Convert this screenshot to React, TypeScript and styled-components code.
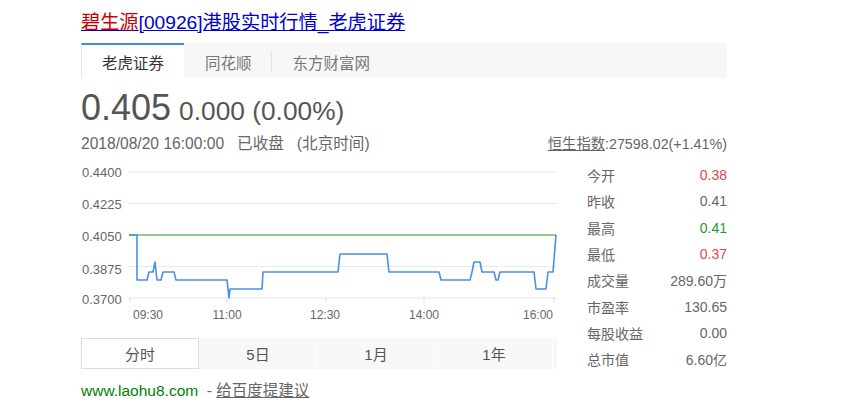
import React from 'react';
import styled, { createGlobalStyle } from 'styled-components';

const GlobalStyle = createGlobalStyle`
  html, body {
    margin: 0;
    padding: 0;
    background: #fff;
  }
  body {
    font-family: "Liberation Sans", Arial, "Noto Sans CJK SC", sans-serif;
    color: #555;
  }
`;

const Page = styled.div`
  width: 646px;
  padding: 10px 0 0 81px;
`;

const Title = styled.a`
  display: block;
  font-size: 19.2px;
  line-height: 25px;
  color: #0000cc;
  text-decoration: underline;
  white-space: nowrap;
`;

const Em = styled.span`
  color: #cc0000;
`;

const TabBar = styled.div`
  display: flex;
  height: 35px;
  margin-top: 8px;
  background: #f7f7f7;
`;

const Tab = styled.div<{ active?: boolean; divider?: boolean }>`
  position: relative;
  box-sizing: border-box;
  padding: 0 20px;
  display: flex;
  align-items: center;
  font-size: 15.5px;
  color: ${({ active }) => (active ? '#333' : '#777')};
  background: ${({ active }) => (active ? '#fff' : 'transparent')};
  border-top: 2px solid ${({ active }) => (active ? '#3d8ee6' : 'transparent')};
  border-left: 1px solid ${({ active }) => (active ? '#e6e6e6' : 'transparent')};
  ${({ divider }) =>
    divider &&
    `
    &::after {
      content: '';
      position: absolute;
      right: 0;
      top: 6px;
      height: 21px;
      width: 1px;
      background: #e2e2e2;
    }
  `}
`;

const PriceRow = styled.div`
  display: flex;
  align-items: baseline;
  margin-top: 12px;
  color: #555;
`;

const Price = styled.span`
  font-size: 36px;
  line-height: 36px;
`;

const Change = styled.span`
  font-size: 26.3px;
  margin-left: 8px;
`;

const InfoRow = styled.div`
  display: flex;
  align-items: baseline;
  justify-content: space-between;
  margin-top: 7px;
  line-height: 20px;
`;

const DateText = styled.span`
  font-size: 15.6px;
  color: #666;
  white-space: pre;
`;

const IndexText = styled.span`
  font-size: 14.3px;
  color: #666;
`;

const IndexLink = styled.a`
  color: #666;
  text-decoration: underline;
`;

const Main = styled.div`
  display: flex;
  align-items: flex-start;
  margin-top: 7px;
`;

const ChartColumn = styled.div`
  width: 476px;
`;

const Periods = styled.div`
  display: grid;
  grid-template-columns: repeat(4, 118px);
  margin-top: 7px;
  height: 31px;
  background: #f8f8f8;
`;

const Period = styled.div<{ active?: boolean }>`
  box-sizing: border-box;
  display: flex;
  align-items: center;
  justify-content: center;
  font-size: 15px;
  color: #555;
  background: ${({ active }) => (active ? '#fff' : '#f8f8f8')};
  border: 1px solid ${({ active }) => (active ? '#dcdcdc' : 'transparent')};
  border-right: 1px solid ${({ active }) => (active ? '#dcdcdc' : '#fdfdfd')};
`;

const Stats = styled.div`
  width: 140px;
  margin-left: auto;
  padding-top: 1px;
`;

const StatRow = styled.div`
  display: flex;
  justify-content: space-between;
  align-items: center;
  height: 26.3px;
  font-size: 14px;
`;

const StatLabel = styled.span`
  color: #666;
`;

const StatValue = styled.span<{ tone?: 'up' | 'down' }>`
  color: ${({ tone }) => (tone === 'up' ? '#e04a4e' : tone === 'down' ? '#1f9a1f' : '#666')};
`;

const Footer = styled.div`
  margin-top: 9px;
  font-size: 15.5px;
  line-height: 20px;
  white-space: pre;
`;

const SiteUrl = styled.span`
  color: #008000;
`;

const Suggest = styled.a`
  color: #666;
  text-decoration: underline;
`;

const Dash = styled.span`
  color: #666;
`;

const stats: { label: string; value: string; tone?: 'up' | 'down' }[] = [
  { label: '今开', value: '0.38', tone: 'up' },
  { label: '昨收', value: '0.41' },
  { label: '最高', value: '0.41', tone: 'down' },
  { label: '最低', value: '0.37', tone: 'up' },
  { label: '成交量', value: '289.60万' },
  { label: '市盈率', value: '130.65' },
  { label: '每股收益', value: '0.00' },
  { label: '总市值', value: '6.60亿' },
];

const yLabels = [
  { text: '0.4400', y: 11 },
  { text: '0.4225', y: 43 },
  { text: '0.4050', y: 75 },
  { text: '0.3875', y: 108 },
  { text: '0.3700', y: 138 },
];

const gridY = [11, 42.5, 105.5];
const ticks = [49, 146, 245, 343, 473];

const linePoints = [
  [48, 74], [56, 74], [56, 119], [66, 119], [68, 111], [72, 111], [74, 101], [76, 119],
  [80, 119], [82, 111], [93, 111], [95, 119], [146, 119], [148, 137], [149, 128],
  [181, 128], [182, 111], [257, 111], [259, 93], [306, 93], [308, 111], [358, 111],
  [360, 119], [389, 119], [391, 111], [393, 101], [399, 101], [401, 111], [413, 111],
  [415, 119], [417, 119], [419, 111], [453, 111], [455, 128], [465, 128], [467, 111],
  [472, 111], [475, 74],
]
  .map(([x, y]) => `${x},${y}`)
  .join(' ');

const Chart = () => (
  <svg width="476" height="170" viewBox="0 0 476 170" style={{ display: 'block' }}>
    {gridY.map((y) => (
      <line key={y} x1="47" x2="475" y1={y} y2={y} stroke="#e8e8e8" strokeWidth="1" />
    ))}
    <line x1="47" x2="475" y1="137" y2="137" stroke="#e2e2e2" strokeWidth="1" />
    {ticks.map((x) => (
      <line key={x} x1={x} x2={x} y1="137" y2="142" stroke="#e2e2e2" strokeWidth="1" />
    ))}
    <g fontFamily='"Liberation Sans", Arial, sans-serif' fontSize="13" fill="#666">
      {yLabels.map((l) => (
        <text key={l.text} x="1" y={l.y + 4.6}>
          {l.text}
        </text>
      ))}
    </g>
    <g fontFamily='"Liberation Sans", Arial, sans-serif' fontSize="12" fill="#666">
      <text x="52" y="158.3">09:30</text>
      <text x="146" y="158.3" textAnchor="middle">11:00</text>
      <text x="244" y="158.3" textAnchor="middle">12:30</text>
      <text x="343" y="158.3" textAnchor="middle">14:00</text>
      <text x="472" y="158.3" textAnchor="end">16:00</text>
    </g>
    <line x1="48" x2="475" y1="74" y2="74" stroke="#95cc8a" strokeWidth="2" />
    <polyline points={linePoints} fill="none" stroke="#4a90e2" strokeWidth="1.6" strokeLinejoin="round" />
  </svg>
);

export default function App() {
  return (
    <>
      <GlobalStyle />
      <Page>
        <Title href="#">
          <Em>碧生源</Em>[00926]港股实时行情_老虎证券
        </Title>
        <TabBar>
          <Tab active>老虎证券</Tab>
          <Tab divider>同花顺</Tab>
          <Tab>东方财富网</Tab>
        </TabBar>
        <PriceRow>
          <Price>0.405</Price>
          <Change>0.000 (0.00%)</Change>
        </PriceRow>
        <InfoRow>
          <DateText>2018/08/20 16:00:00   已收盘   (北京时间)</DateText>
          <IndexText>
            <IndexLink href="#">恒生指数</IndexLink>:27598.02(+1.41%)
          </IndexText>
        </InfoRow>
        <Main>
          <ChartColumn>
            <Chart />
            <Periods>
              <Period active>分时</Period>
              <Period>5日</Period>
              <Period>1月</Period>
              <Period>1年</Period>
            </Periods>
          </ChartColumn>
          <Stats>
            {stats.map((s) => (
              <StatRow key={s.label}>
                <StatLabel>{s.label}</StatLabel>
                <StatValue tone={s.tone}>{s.value}</StatValue>
              </StatRow>
            ))}
          </Stats>
        </Main>
        <Footer>
          <SiteUrl>www.laohu8.com</SiteUrl>
          <Dash>  - </Dash>
          <Suggest href="#">给百度提建议</Suggest>
        </Footer>
      </Page>
    </>
  );
}
